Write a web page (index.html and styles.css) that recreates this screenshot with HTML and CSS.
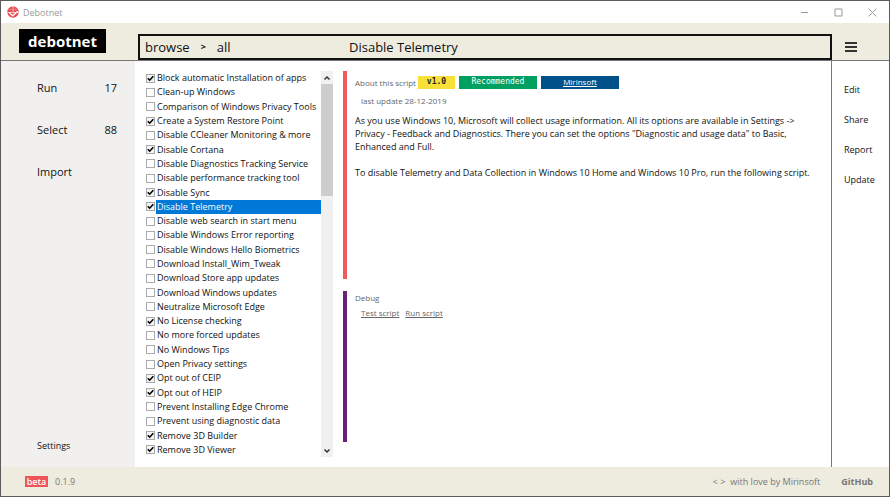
FILE: index.html
```html
<!DOCTYPE html>
<html lang="en">
<head>
<meta charset="utf-8">
<title>Debotnet</title>
<link rel="stylesheet" href="styles.css">
</head>
<body>
<div class="window">
  <div class="titlebar">
    <svg class="app-icon" viewBox="0 0 12 12" aria-hidden="true">
      <circle cx="6" cy="6" r="5.8" fill="#e8474d"/>
      <path d="M6 0v6M0 6.500h12" stroke="#fff" stroke-width=".7"/>
      <path d="M3.200 1v5M8.800 1v5M.8 3.500h10.400" stroke="#f3a0a3" stroke-width=".4"/>
      <path d="M2.200 6.600L5.600 9.800 10.800 5.200" stroke="#fff" stroke-width="1.300" fill="none"/>
    </svg>
    <span class="app-name">Debotnet</span>
    <div class="window-buttons">
      <button type="button" aria-label="Minimize"><svg viewBox="0 0 9 9"><path d="M1 4.500h7"/></svg></button>
      <button type="button" aria-label="Maximize"><svg viewBox="0 0 9 9"><path d="M1 1h7v7h-7z"/></svg></button>
      <button type="button" aria-label="Close"><svg viewBox="0 0 9 9"><path d="M.5 .5l8 8M8.500 .5l-8 8"/></svg></button>
    </div>
  </div>
  <header class="header">
    <div class="brand"><h1 class="logo">debotnet</h1></div>
    <div class="path">
      <div class="crumbs"><a href="#">browse</a><span class="chevron">&gt;</span><a href="#">all</a></div>
      <h2 class="script-title">Disable Telemetry</h2>
    </div>
    <button type="button" class="menu" aria-label="Menu"><svg viewBox="0 0 12 10"><path d="M0 1h12M0 5h12M0 9h12"/></svg></button>
  </header>
  <main class="content">
    <nav class="sidebar">
      <a href="#"><span>Run</span><span>17</span></a>
      <a href="#"><span>Select</span><span>88</span></a>
      <a href="#"><span>Import</span></a>
      <a href="#" class="settings">Settings</a>
    </nav>
    <div class="scripts">
      <div class="script-list">
        <label><input type="checkbox" checked><span>Block automatic Installation of apps</span></label>
        <label><input type="checkbox"><span>Clean-up Windows</span></label>
        <label><input type="checkbox"><span>Comparison of Windows Privacy Tools</span></label>
        <label><input type="checkbox" checked><span>Create a System Restore Point</span></label>
        <label><input type="checkbox"><span>Disable CCleaner Monitoring &amp; more</span></label>
        <label><input type="checkbox" checked><span>Disable Cortana</span></label>
        <label><input type="checkbox"><span>Disable Diagnostics Tracking Service</span></label>
        <label><input type="checkbox"><span>Disable performance tracking tool</span></label>
        <label><input type="checkbox" checked><span>Disable Sync</span></label>
        <label class="selected"><input type="checkbox" checked><span>Disable Telemetry</span></label>
        <label><input type="checkbox"><span>Disable web search in start menu</span></label>
        <label><input type="checkbox"><span>Disable Windows Error reporting</span></label>
        <label><input type="checkbox"><span>Disable Windows Hello Biometrics</span></label>
        <label><input type="checkbox"><span>Download Install_Wim_Tweak</span></label>
        <label><input type="checkbox"><span>Download Store app updates</span></label>
        <label><input type="checkbox"><span>Download Windows updates</span></label>
        <label><input type="checkbox"><span>Neutralize Microsoft Edge</span></label>
        <label><input type="checkbox" checked><span>No License checking</span></label>
        <label><input type="checkbox"><span>No more forced updates</span></label>
        <label><input type="checkbox"><span>No Windows Tips</span></label>
        <label><input type="checkbox"><span>Open Privacy settings</span></label>
        <label><input type="checkbox" checked><span>Opt out of CEIP</span></label>
        <label><input type="checkbox" checked><span>Opt out of HEIP</span></label>
        <label><input type="checkbox"><span>Prevent Installing Edge Chrome</span></label>
        <label><input type="checkbox"><span>Prevent using diagnostic data</span></label>
        <label><input type="checkbox" checked><span>Remove 3D Builder</span></label>
        <label><input type="checkbox" checked><span>Remove 3D Viewer</span></label>
      </div>
      <div class="scrollbar">
        <button type="button" aria-label="Scroll up"><svg viewBox="0 0 8 6"><path d="M1.500 4.500L4 2l2.500 2.500"/></svg></button>
        <div class="track"><div class="thumb"></div></div>
        <button type="button" aria-label="Scroll down"><svg viewBox="0 0 8 6"><path d="M1.500 1.500L4 4l2.500-2.500"/></svg></button>
      </div>
    </div>
    <div class="details">
      <section class="about">
        <div class="meta">
          <span class="caption">About this script</span>
          <div class="tags">
            <span class="tag version">v1.0</span>
            <span class="tag recommended">Recommended</span>
            <a href="#" class="tag author">Mirinsoft</a>
          </div>
        </div>
        <p class="updated">last update 28-12-2019</p>
        <p>As you use Windows 10, Microsoft will collect usage information. All its options are available in Settings -&gt; Privacy - Feedback and Diagnostics. There you can set the options "Diagnostic and usage data" to Basic, Enhanced and Full.</p>
        <p>To disable Telemetry and Data Collection in Windows 10 Home and Windows 10 Pro, run the following script.</p>
      </section>
      <section class="debug">
        <h3 class="caption">Debug</h3>
        <div class="debug-links"><a href="#">Test script</a><a href="#">Run script</a></div>
      </section>
    </div>
    <nav class="actions">
      <a href="#">Edit</a>
      <a href="#">Share</a>
      <a href="#">Report</a>
      <a href="#">Update</a>
    </nav>
  </main>
  <footer class="footer">
    <span class="beta">beta</span>
    <span>0.1.9</span>
    <span class="credit"><span>&lt; &gt;</span><span>with love by Mirinsoft</span></span>
    <a href="#" class="github">GitHub</a>
  </footer>
</div>
</body>
</html>
```
FILE: styles.css
```css
* {
  box-sizing: border-box;
}

body {
  margin: 0;
  font: 9px/13px "Open Sans", "Noto Sans", sans-serif;
  color: #111;
}

h1, h2, h3, p {
  margin: 0;
  font-weight: 400;
}

a {
  color: inherit;
  text-decoration: none;
}

button {
  display: flex;
  align-items: center;
  justify-content: center;
  padding: 0;
  border: 0;
  background: none;
}

svg {
  fill: none;
}

.window {
  display: flex;
  flex-direction: column;
  min-height: 100vh;
  border: 1px solid #5c5a5d;
  background: #fff;
}

.titlebar {
  display: flex;
  align-items: center;
  height: 22px;
  padding-left: 6px;
  gap: 4px;
  color: #999;
}

.app-icon {
  width: 12px;
  height: 12px;
}

.window-buttons {
  display: flex;
  margin-left: auto;
}

.window-buttons button {
  width: 34px;
  height: 22px;
}

.window-buttons svg {
  width: 9px;
  height: 9px;
  stroke: #999;
}

.header {
  display: grid;
  grid-template-columns: 137px 1fr 57px;
  align-items: end;
  height: 38px;
  border-bottom: 1px solid #777;
  background: #eeecdf;
}

.brand {
  align-self: start;
  padding: 6px 0 0 18px;
}

.logo {
  width: 87px;
  background: #000;
  color: #fff;
  font-size: 15px;
  line-height: 24px;
  font-weight: 700;
  text-align: center;
}

.path {
  display: grid;
  grid-template-columns: 204px 1fr;
  align-items: center;
  height: 26px;
  padding: 0 5px;
  border: 2px solid #111;
  font-size: 13px;
  line-height: 20px;
}

.crumbs {
  display: flex;
  align-items: center;
  gap: 11px;
}

.chevron {
  font-size: 9px;
  font-weight: 700;
}

.script-title {
  font-size: 13px;
}

.menu {
  height: 26px;
  padding-left: 13px;
  justify-content: flex-start;
}

.menu svg {
  width: 12px;
  height: 10px;
  stroke: #333;
  stroke-width: 2px;
}

.content {
  display: grid;
  grid-template-columns: 134px 198px 1fr 58px;
  flex: 1;
}

.sidebar {
  display: flex;
  flex-direction: column;
  gap: 22px;
  padding: 17px 18px 15px 36px;
  background: #f2f0ef;
  font-size: 11px;
  line-height: 20px;
}

.sidebar a {
  display: flex;
  justify-content: space-between;
}

.sidebar .settings {
  margin-top: auto;
  font-size: 9px;
  line-height: 13px;
}

.scripts {
  display: flex;
  padding: 10px 0 10px 11px;
}

.script-list {
  display: grid;
  grid-auto-rows: 1fr;
  flex: 1;
  min-width: 0;
}

.script-list label {
  display: flex;
  align-items: center;
  gap: 1px;
  line-height: 14px;
  white-space: nowrap;
}

.script-list span {
  flex: 1;
  padding-left: 1px;
}

.script-list .selected span {
  background: #0078d7;
  color: #fff;
}

.script-list input {
  appearance: none;
  flex: none;
  width: 9px;
  height: 9px;
  margin: 0;
  border: 1px solid #aaa;
  background: #fff;
}

.script-list input:checked {
  background: #f4f4f4 url("data:image/svg+xml,%3Csvg xmlns='http://www.w3.org/2000/svg' viewBox='0 0 7 7'%3E%3Cpath d='M.8 3.200L2.700 5.200 6.300 1.300' fill='none' stroke='%23000' stroke-width='1.600'/%3E%3C/svg%3E");
}

.scrollbar {
  display: flex;
  flex: none;
  flex-direction: column;
  width: 12px;
  background: #f0f0f0;
}

.scrollbar button {
  height: 13px;
}

.scrollbar svg {
  width: 8px;
  height: 6px;
  stroke: #333;
  stroke-width: 1.5px;
}

.track {
  flex: 1;
}

.thumb {
  height: 31%;
  background: #cdcdcd;
}

.details {
  display: flex;
  flex-direction: column;
  gap: 12px;
  padding: 10px 16px 25px 10px;
}

.about,
.debug {
  padding-left: 8px;
  border-left: 4px solid #f05a5b;
}

.about {
  flex: 209;
  display: flex;
  flex-direction: column;
  gap: 13px;
}

.debug {
  flex: 151;
  border-color: #68217a;
}

.meta {
  display: flex;
  align-items: center;
  gap: 2px;
  padding-top: 5px;
  margin-bottom: -8px;
}

.caption {
  color: #666;
  font-size: 8px;
}

.tags {
  display: flex;
  gap: 4px;
}

.tag {
  width: 78px;
  font: 8px/11px "DejaVu Sans Mono", monospace;
  height: 13px;
  color: #fff;
  text-align: center;
}

.version {
  width: 37px;
  background: #f8e038;
  color: #222;
  font-weight: 700;
}

.recommended {
  background: #00a060;
}

.author {
  background: #00508a;
  font-family: "Open Sans", sans-serif;
  text-decoration: underline;
}

.updated {
  margin-bottom: -6px;
  padding-left: 6px;
  color: #666;
  font-size: 8px;
}

.debug-links {
  display: flex;
  gap: 6px;
  padding: 2px 0 0 6px;
  color: #666;
  font-size: 8px;
}

.debug-links a {
  text-decoration: underline;
}

.actions {
  display: flex;
  flex-direction: column;
  gap: 17px;
  padding: 22px 0 0 12px;
  border-left: 1px solid #777;
}

.footer {
  display: flex;
  align-items: center;
  height: 29px;
  padding: 0 16px 0 24px;
  gap: 7px;
  background: #eeecdf;
  color: #777;
}

.beta {
  width: 23px;
  background: #ee5558;
  color: #fff;
  font-weight: 600;
  line-height: 11px;
  text-align: center;
}

.credit {
  display: flex;
  gap: 5px;
  margin-left: auto;
}

.github {
  margin-left: 14px;
  font-weight: 700;
}
```
